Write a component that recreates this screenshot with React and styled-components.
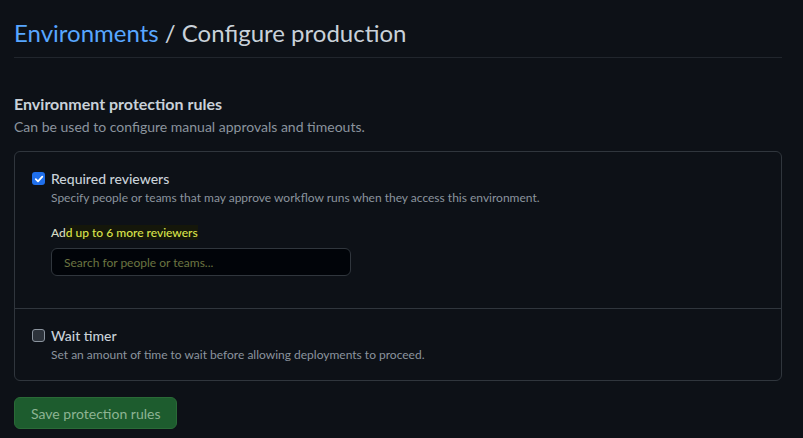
import React from 'react';
import styled, { createGlobalStyle } from 'styled-components';

const GlobalStyle = createGlobalStyle`
    html, body {
        margin: 0;
        padding: 0;
        background: #0d1117;
    }
    body {
        font-family: Lato, "Noto Sans", sans-serif;
        color: #c9d1d9;
    }
`;

const Page = styled.div`
    width: 768px;
    padding: 15px 0 0 14px;
`;

const Title = styled.h1`
    font-size: 24px;
    font-weight: 400;
    line-height: 36px;
    margin: 0;
    padding-bottom: 6px;
    border-bottom: 1px solid #21262d;
    color: #c9d1d9;
`;

const Crumb = styled.a`
    color: #58a6ff;
    text-decoration: none;
`;

const Section = styled.div`
    margin-top: 34px;
`;

const Heading = styled.h2`
    font-size: 16px;
    font-weight: 700;
    line-height: 24px;
    margin: 0;
    color: #c9d1d9;
`;

const Subtitle = styled.p`
    font-size: 14px;
    line-height: 21px;
    margin: 0;
    color: #8b949e;
`;

const Box = styled.div`
    margin-top: 14px;
    border: 1px solid #30363d;
    border-radius: 6px;
`;

const Rule = styled.div`
    padding: 16px 16px ${p => p.$bottom || 16}px;
    border-top: ${p => (p.$first ? 'none' : '1px solid #30363d')};
`;

const CheckRow = styled.label`
    display: flex;
    align-items: center;
    gap: 6px;
    font-size: 14px;
    font-weight: 500;
    line-height: 21px;
    color: #c9d1d9;
`;

const Check = styled.span`
    width: 13px;
    height: 13px;
    box-sizing: border-box;
    border-radius: 3px;
    display: inline-flex;
    align-items: center;
    justify-content: center;
    margin-left: 1px;
    background: ${p => (p.$on ? '#1f6feb' : '#2d333b')};
    border: ${p => (p.$on ? 'none' : '1.5px solid #8b949e')};
`;

const Note = styled.div`
    margin-left: 20px;
    font-size: 12px;
    line-height: 18px;
    color: #8b949e;
`;

const Reviewers = styled.div`
    margin: 17px 0 0 20px;
`;

const AddLabel = styled.div`
    font-size: 12px;
    line-height: 18px;
    font-weight: 500;
    color: #d6dcc4;
`;

const Highlight = styled.span`
    color: #dbe34a;
    background: #15170a;
`;

const Search = styled.input`
    display: block;
    margin-top: 6px;
    width: 300px;
    height: 28px;
    box-sizing: border-box;
    padding: 0 12px;
    border: 1px solid #30363d;
    border-radius: 6px;
    background: #010409;
    font-family: inherit;
    font-size: 12px;
    color: #c9d1d9;
    outline: none;
    &::placeholder {
        color: #6b7441;
    }
`;

const SaveButton = styled.button`
    margin-top: 16px;
    height: 32px;
    padding: 0 16px;
    border: 1px solid #2a6a37;
    border-radius: 6px;
    background: #1d5c2e;
    color: #8db493;
    font-family: inherit;
    font-size: 14px;
`;

function Tick() {
    return (
        <svg width="10" height="10" viewBox="0 0 10 10">
            <path d="M1.8 5.2 L4 7.3 L8.3 2.6" fill="none" stroke="#fff" strokeWidth="1.8" strokeLinecap="round" strokeLinejoin="round" />
        </svg>
    );
}

export default function App() {
    return (
        <Page>
            <GlobalStyle />
            <Title><Crumb href="#">Environments</Crumb> / Configure production</Title>
            <Section>
                <Heading>Environment protection rules</Heading>
                <Subtitle>Can be used to configure manual approvals and timeouts.</Subtitle>
                <Box>
                    <Rule $first $bottom={32}>
                        <CheckRow><Check $on><Tick /></Check>Required reviewers</CheckRow>
                        <Note>Specify people or teams that may approve workflow runs when they access this environment.</Note>
                        <Reviewers>
                            <AddLabel>Ad<Highlight>d up to 6 more reviewers</Highlight></AddLabel>
                            <Search placeholder="Search for people or teams..." />
                        </Reviewers>
                    </Rule>
                    <Rule $bottom={16}>
                        <CheckRow><Check />Wait timer</CheckRow>
                        <Note>Set an amount of time to wait before allowing deployments to proceed.</Note>
                    </Rule>
                </Box>
                <SaveButton>Save protection rules</SaveButton>
            </Section>
        </Page>
    );
}
